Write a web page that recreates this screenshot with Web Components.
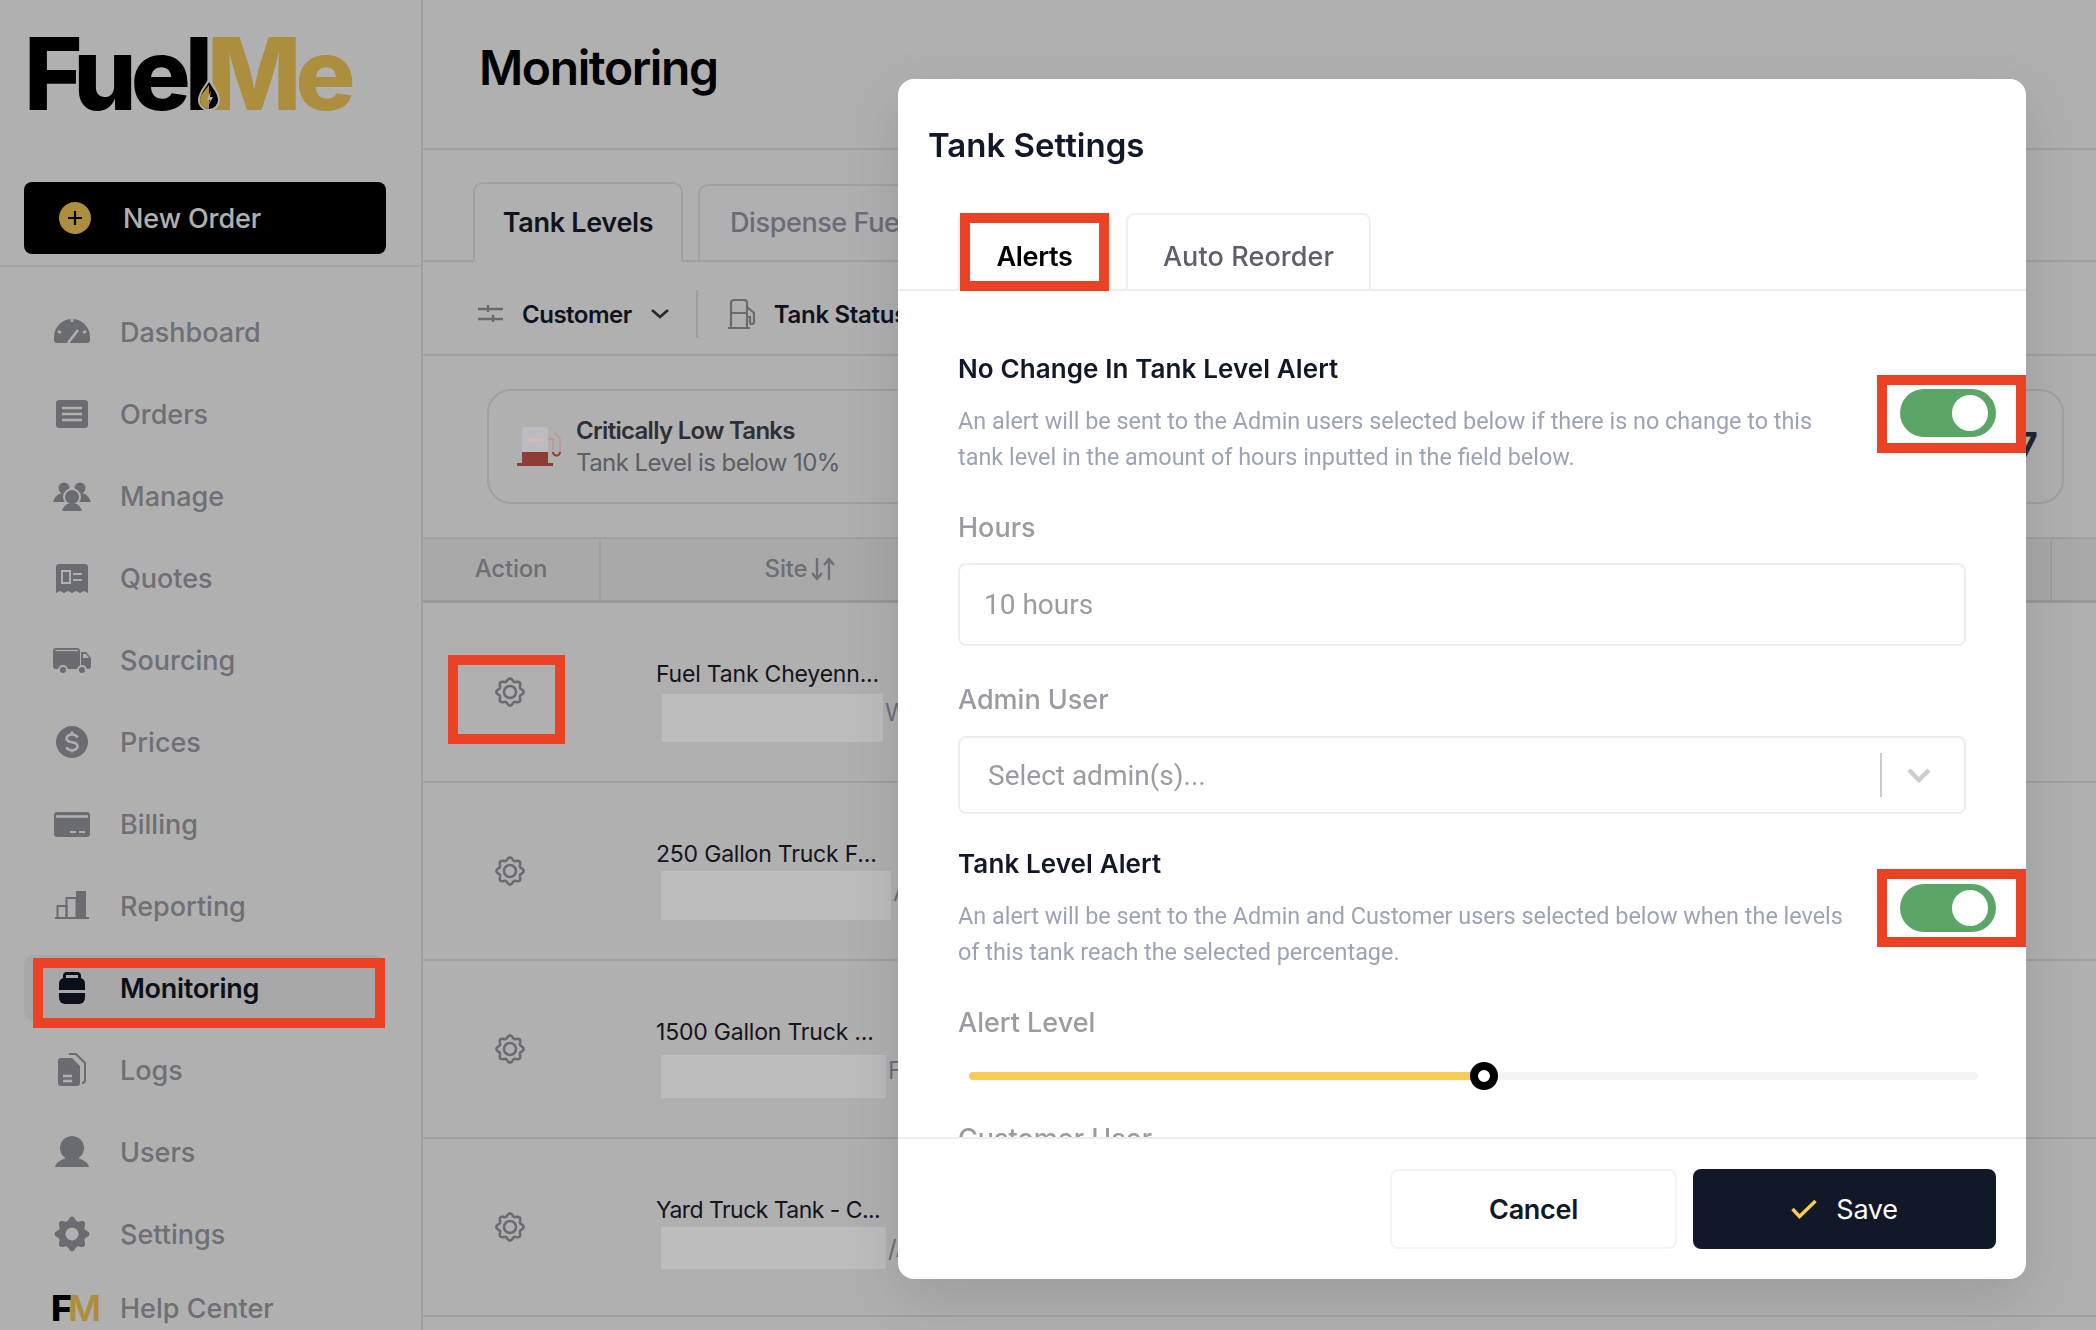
<!DOCTYPE html>
<html lang="en">
<head>
<meta charset="utf-8">
<title>FuelMe - Monitoring</title>
<style>
  html, body { margin: 0; height: 100%; }
  body { background: #fff; color: #111827; font-family: Inter, "Liberation Sans", sans-serif; overflow: hidden; }
</style>
</head>
<body>
<fm-app>
  <fm-sidebar slot="sidebar">
    <fm-nav-item label="Dashboard"><svg viewBox="0 0 36 36"><path d="M0 26v-3a18 18 0 0 1 36 0v3a3 3 0 0 1-3 3H3a3 3 0 0 1-3-3z"/><path d="M14 29l10-13M18 5v3M4 17l3 2M32 17l-3 2" stroke="#fff" stroke-width="2.6" fill="none"/></svg></fm-nav-item>
    <fm-nav-item label="Orders"><svg viewBox="0 0 36 36"><rect x="2" y="4" width="32" height="28" rx="3"/><path d="M8 12h20M8 18h20M8 24h20" stroke="#fff" stroke-width="2.6"/></svg></fm-nav-item>
    <fm-nav-item label="Manage"><svg viewBox="0 0 36 36"><circle cx="10" cy="10" r="5.5"/><circle cx="26" cy="10" r="5.5"/><path d="M-1 24c2-6 6-9 10-9s7 3 9 9zM18 24c2-6 5-9 9-9s8 3 10 9z"/><circle cx="18" cy="19" r="8" stroke="#fff" stroke-width="2"/><path d="M8 33c1.500-5 5-8 10-8s8.500 3 10 8z"/></svg></fm-nav-item>
    <fm-nav-item label="Quotes"><svg viewBox="0 0 36 36"><path d="M5 4h26a3 3 0 0 1 3 3v26l-4-2-4 2-4-2-4 2-4-2-4 2-4-2-4 2V7a3 3 0 0 1 3-3z"/><rect x="8" y="11" width="8" height="12" stroke="#fff" stroke-width="2" fill="none"/><path d="M19 14h9M19 20h9" stroke="#fff" stroke-width="2.200"/></svg></fm-nav-item>
    <fm-nav-item label="Sourcing"><svg viewBox="0 0 36 36"><rect x="-1" y="6" width="27" height="21" rx="3"/><path d="M27 10h5l5 6v9a3 3 0 0 1-3 2h-7z"/><path d="M1.500 8.500h22.500" fill="none" stroke="#fff" stroke-width="1.200"/><path d="M29 12h3l3 4h-6z" fill="#fff"/><circle cx="9" cy="28" r="4" stroke="#fff" stroke-width="2"/><circle cx="28" cy="28" r="4" stroke="#fff" stroke-width="2"/></svg></fm-nav-item>
    <fm-nav-item label="Prices"><svg viewBox="0 0 36 36"><circle cx="18" cy="18" r="16"/><path d="M23.500 13.500c-.8-2-3-3-5.500-3-3 0-5.500 1.500-5.500 4s2.500 3.200 5.500 3.700 5.500 1.500 5.500 4-2.500 4-5.500 4c-2.500 0-4.700-1-5.500-3M18 7.500v3M18 25.500v3" stroke="#fff" stroke-width="2.600" fill="none"/></svg></fm-nav-item>
    <fm-nav-item label="Billing"><svg viewBox="0 0 36 36"><rect y="6" width="36" height="25" rx="3"/><path d="M2 10.500h32" stroke="#fff" stroke-width="2.600"/><path d="M16 26h6M25 26h6" stroke="#fff" stroke-width="2.200"/></svg></fm-nav-item>
    <fm-nav-item label="Reporting"><svg viewBox="0 0 36 36"><path d="M1 30h34" stroke="currentColor" stroke-width="2"/><rect x="3.500" y="18" width="9" height="12" fill="none" stroke="currentColor" stroke-width="2"/><rect x="12.500" y="10" width="10" height="20" fill="none" stroke="currentColor" stroke-width="2"/><rect x="22" y="3" width="10" height="27"/></svg></fm-nav-item>
    <fm-nav-item label="Monitoring" active><svg viewBox="0 0 36 36"><path d="M13 2h10a4 4 0 0 1 4 4v2c3 1 4 3 4 6v6H5v-6c0-3 1-5 4-6V6a4 4 0 0 1 4-4z"/><rect x="12" y="5" width="12" height="3" fill="#f4f4f4"/><path d="M5 23h26v5a6 6 0 0 1-6 6H11a6 6 0 0 1-6-6z"/></svg></fm-nav-item>
    <fm-nav-item label="Logs"><svg viewBox="0 0 36 36"><path d="M15 2h7l9 9v17c0 2-1 3-3 3" fill="none" stroke="currentColor" stroke-width="2"/><path d="M7 6h11l8 8v17a3 3 0 0 1-3 3H7a3 3 0 0 1-3-3V9a3 3 0 0 1 3-3z"/><path d="M9 24h9M9 29h9" stroke="#fff" stroke-width="2.400"/></svg></fm-nav-item>
    <fm-nav-item label="Users"><svg viewBox="0 0 36 36"><circle cx="18" cy="14" r="12"/><path d="M1 33c1-5 6-7 11-9h12c5 2 10 4 11 9z"/></svg></fm-nav-item>
    <fm-nav-item label="Settings"><fm-gear filled></fm-gear></fm-nav-item>
    <fm-nav-item label="Help Center" tight><fm-mini-logo></fm-mini-logo></fm-nav-item>
  </fm-sidebar>

  <fm-monitoring slot="main">
    <fm-row name="Fuel Tank Cheyenn..." frag="W" box="221,48,91,6" first></fm-row>
    <fm-row name="250 Gallon Truck F..." frag="A" box="230,49,88,5"></fm-row>
    <fm-row name="1500 Gallon Truck ..." frag="F" box="225,43,94,5"></fm-row>
    <fm-row name="Yard Truck Tank - C..." frag="/A" box="225,42,88,5" style="--name-spacing:-0.55px"></fm-row>
  </fm-monitoring>
</fm-app>

<fm-overlay></fm-overlay>

<fm-modal heading="Tank Settings">
  <fm-alert-section heading="No Change In Tank Level Alert">An alert will be sent to the Admin users selected below if there is no change to this<br>tank level in the amount of hours inputted in the field below.</fm-alert-section>
  <fm-field label="Hours" gap="37" space="19"><fm-input value="10 hours"></fm-input></fm-field>
  <fm-field label="Admin User" gap="38" space="20"><fm-select placeholder="Select admin(s)..."></fm-select></fm-field>
  <fm-alert-section heading="Tank Level Alert" gap="32">An alert will be sent to the Admin and Customer users selected below when the levels<br>of this tank reach the selected percentage.</fm-alert-section>
  <fm-field label="Alert Level" gap="37" space="23" wide><fm-slider value="51"></fm-slider></fm-field>
  <fm-field label="Customer User" gap="33" space="20"><fm-select placeholder="Select customer(s)..."></fm-select></fm-field>
</fm-modal>

<fm-annotation x="33" y="958" w="352" h="70"></fm-annotation>
<fm-annotation x="448" y="655" w="117" h="89"></fm-annotation>
<fm-annotation x="960" y="213" w="149" h="78"></fm-annotation>
<fm-annotation x="1877" y="375" w="149" h="78"></fm-annotation>
<fm-annotation x="1877" y="869" w="149" h="78"></fm-annotation>

<script>
function gearPath(cx, cy, radius, bump, lobes) {
  const points = [];
  for (let i = 0; i < 96; i++) {
    const angle = (i / 96) * Math.PI * 2;
    const r = radius + bump * Math.cos(angle * lobes);
    points.push(`${(cx + r * Math.sin(angle)).toFixed(2)} ${(cy - r * Math.cos(angle)).toFixed(2)}`);
  }
  return `M${points.join('L')}Z`;
}

class FmApp extends HTMLElement {
  connectedCallback() {
    this.attachShadow({ mode: 'open' }).innerHTML = `
      <style>
        :host { display: flex; width: 100%; height: 1330px; overflow: hidden; }
        ::slotted([slot="main"]) { flex: 1; min-width: 0; }
      </style>
      <slot name="sidebar"></slot>
      <slot name="main"></slot>`;
  }
}

class FmSidebar extends HTMLElement {
  connectedCallback() {
    this.attachShadow({ mode: 'open' }).innerHTML = `
      <style>
        :host { display: block; flex: none; width: 423px; box-sizing: border-box; border-right: 2px solid #e8e8e8; }
        .head { height: 267px; box-sizing: border-box; border-bottom: 2px solid #efefef; padding: 38px 0 0 24px; }
        .new {
          display: flex; align-items: center; gap: 32px; width: 362px; height: 72px; margin-top: 72px;
          box-sizing: border-box; padding-left: 35px; background: #000; border-radius: 8px;
          color: #fff; font-size: 27px; font-weight: 500; letter-spacing: -0.1px;
        }
        .new svg { width: 32px; height: 32px; }
        nav { display: flex; flex-direction: column; gap: 16px; padding: 32px 36px 0 24px; }
      </style>
      <div class="head">
        <fm-logo></fm-logo>
        <div class="new">
          <svg viewBox="0 0 32 32"><circle cx="16" cy="16" r="16" fill="#faCE5A"/><path d="M16 9v14M9 16h14" stroke="#000" stroke-width="2.200"/></svg>
          <span>New Order</span>
        </div>
      </div>
      <nav><slot></slot></nav>`;
  }
}

class FmLogo extends HTMLElement {
  connectedCallback() {
    this.attachShadow({ mode: 'open' }).innerHTML = `
      <style>
        :host { display: block; position: relative; width: 330px; height: 72px; }
        .word { display: block; font-size: 100px; line-height: 72px; font-weight: 800; letter-spacing: -6px; color: #000; white-space: nowrap; }
        .me { color: #faCE5A; }
        svg { position: absolute; left: 174px; top: 41px; width: 22px; height: 32px; }
      </style>
      <span class="word">Fuel<span class="me">Me</span></span>
      <svg viewBox="0 0 22 32"><path d="M11 1c3 6 10 12 10 20a10 10 0 0 1-20 0C1 13 8 7 11 1z" fill="#000" stroke="#fff" stroke-width="2"/><path d="M2 21a9 9 0 0 0 9 9V6C8 11 2 15 2 21z" fill="#faCE5A"/><path d="M13 11l-4 10h3l-2 6 5-9h-3z" fill="#fff"/></svg>`;
  }
}

class FmMiniLogo extends HTMLElement {
  connectedCallback() {
    this.attachShadow({ mode: 'open' }).innerHTML = `
      <style>
        :host { display: block; width: 40px; margin-left: -3px; font-size: 36px; line-height: 36px; font-weight: 800; letter-spacing: -4px; color: #000; white-space: nowrap; }
        span { color: #faCE5A; font-weight: 600; }
      </style>
      F<span>M</span>`;
  }
}

class FmNavItem extends HTMLElement {
  connectedCallback() {
    const active = this.hasAttribute('active');
    if (this.hasAttribute('tight')) this.style.marginTop = '-8px';
    this.attachShadow({ mode: 'open' }).innerHTML = `
      <style>
        :host { display: flex; align-items: center; gap: 30px; height: 66px; padding-left: 30px; border-radius: 10px;
          font-size: 27px; font-weight: ${active ? 600 : 500}; letter-spacing: ${active ? -0.3 : 0}px;
          color: ${active ? '#111827' : '#a0a2ab'}; background: ${active ? '#f4f4f4' : 'transparent'}; }
        .icon { width: 36px; height: 36px; flex: none; color: ${active ? '#111827' : '#9c9da5'}; }
        ::slotted(svg) { width: 36px; height: 36px; display: block; fill: currentColor; overflow: visible; }
      </style>
      <div class="icon"><slot></slot></div>
      <span>${this.getAttribute('label')}</span>`;
  }
}

class FmGear extends HTMLElement {
  connectedCallback() {
    const filled = this.hasAttribute('filled');
    const body = filled
      ? `<path d="${gearPath(18, 18, 15.5, 2, 8)}" fill="currentColor"/><circle cx="18" cy="18" r="6.500" fill="#fff"/>`
      : `<path d="${gearPath(15, 15, 12.2, 1.4, 8)}" fill="none" stroke="currentColor" stroke-width="2.600"/><circle cx="15" cy="15" r="6" fill="none" stroke="currentColor" stroke-width="2.600"/>`;
    this.attachShadow({ mode: 'open' }).innerHTML = `
      <style>:host { display: block; width: ${filled ? 36 : 30}px; height: ${filled ? 36 : 30}px; } svg { display: block; width: 100%; height: 100%; }</style>
      <svg viewBox="0 0 ${filled ? '36 36' : '30 30'}">${body}</svg>`;
  }
}

class FmMonitoring extends HTMLElement {
  connectedCallback() {
    this.attachShadow({ mode: 'open' }).innerHTML = `
      <style>
        :host { display: block; }
        header { height: 150px; box-sizing: border-box; border-bottom: 2px solid #eaeaea; padding: 42px 0 0 56px; }
        h1 { margin: 0; font-size: 48px; line-height: 52px; font-weight: 600; letter-spacing: -1.400px; color: #000; }
        .tabs { display: flex; align-items: flex-end; gap: 15px; height: 112px; box-sizing: border-box; border-bottom: 2px solid #eaeaea; padding-left: 50px; }
        .tab { box-sizing: border-box; height: 76px; padding: 0 30px 2px; display: flex; align-items: center; border: 2px solid #eaeaea; border-bottom: 0; border-radius: 10px 10px 0 0; font-size: 27px; font-weight: 500; letter-spacing: -0.400px; color: #9b9dae; white-space: nowrap; }
        .tab.on { width: 210px; height: 80px; margin-bottom: -2px; padding: 0 0 1px; justify-content: center; background: #fff; color: #181c2d; font-weight: 600; letter-spacing: -0.300px; }
        .filters { display: flex; align-items: center; height: 94px; box-sizing: border-box; border-bottom: 2px solid #eaeaea; padding: 12px 0 0 55px; font-size: 24px; font-weight: 600; color: #181c2d; letter-spacing: -0.300px; white-space: nowrap; }
        .filters .sep { width: 2px; height: 48px; background: #e4e4e4; margin: 0 30px 0 27px; }
        .filters svg { flex: none; }
        .summary { height: 181px; box-sizing: border-box; padding: 33px 32px 0 64px; }
        .card { display: flex; align-items: center; height: 115px; box-sizing: border-box; border: 2px solid #e8e8e8; border-radius: 24px; padding: 0 24px 0 28px; }
        .card svg { position: relative; z-index: 20; flex: none; margin-right: 15px; }
        .card b { display: block; font-size: 24px; line-height: 32px; font-weight: 600; color: #444450; letter-spacing: -0.700px; }
        .card small { display: block; font-size: 24px; line-height: 32px; font-weight: 400; color: #858a94; letter-spacing: -0.550px; }
        .count { margin-left: auto; font-size: 40px; font-weight: 600; color: #333746; }
        .thead { display: flex; height: 66px; box-sizing: border-box; background: #f5f5f6; border-top: 2px solid #e6e6e6; border-bottom: 3px solid #dcdcdc; font-size: 24px; font-weight: 500; color: #9fa1aa; letter-spacing: -0.200px; }
        .thead div { display: flex; align-items: center; justify-content: center; gap: 4px; box-sizing: border-box; padding-bottom: 2px; }
        .thead .action { width: 178px; border-right: 2px solid #e6e6e6; }
        .thead .site { width: 398px; }
        .thead .rest { flex: 1; justify-content: flex-start; padding: 0 0 0 1051px; }
        .thead .rest i { display: block; width: 2px; height: 100%; background: #e6e6e6; }
      </style>
      <header><h1>Monitoring</h1></header>
      <div class="tabs">
        <div class="tab on">Tank Levels</div>
        <div class="tab">Dispense Fuel</div>
      </div>
      <div class="filters">
        <svg width="25" height="24" viewBox="0 0 25 24" fill="none" stroke="#9a9ba1" stroke-width="2.400"><path d="M0 7h25M0 17h25M10 3v7M15 13v7"/></svg>
        <span style="margin:0 19px;letter-spacing:-0.5px">Customer</span>
        <svg width="18" height="10" viewBox="0 0 18 10" fill="none" stroke="#3a3d4a" stroke-width="2.600"><path d="M1 1l8 7 8-7"/></svg>
        <div class="sep"></div>
        <svg width="29" height="30" viewBox="0 0 29 30" fill="none" stroke="#9a9ba1" stroke-width="2.200"><path d="M0 29h22M3 29V4a3 3 0 0 1 3-3h10a3 3 0 0 1 3 3v25M3 14h16M19 8l7 6v9a2 2 0 0 1-4 0v-5h-3"/></svg>
        <span style="margin-left:17px">Tank Status</span>
      </div>
      <div class="summary">
        <div class="card">
          <svg width="44" height="40" viewBox="0 0 44 40"><path d="M5 3a3 3 0 0 1 3-3h20a3 3 0 0 1 3 3v34H5z" fill="#bcbcc0"/><path d="M5 25h26v11H5z" fill="#8f3c34"/><path d="M0 36h36v3H0z" fill="#8f3c34"/><path d="M11 13h15" stroke="#dcb8b0" stroke-width="2.500"/><path d="M31 12h5v13a3 3 0 0 0 7 0V12l-5-6" fill="none" stroke="#c4958c" stroke-width="1.600"/><path d="M36 25a3 3 0 0 0 7 0" fill="none" stroke="#8f3c34" stroke-width="2"/></svg>
          <div><b>Critically Low Tanks</b><small>Tank Level is below 10%</small></div>
          <span class="count">7</span>
        </div>
      </div>
      <div class="thead">
        <div class="action">Action</div>
        <div class="site">Site
          <svg width="24" height="24" viewBox="0 0 24 24" fill="none" stroke="#9fa1aa" stroke-width="2.400"><path d="M6 1v21M1 16l5 6 5-6M18 23V2M13 8l5-6 5 6"/></svg>
        </div>
        <div class="rest"><i></i></div>
      </div>
      <slot></slot>`;
  }
}

class FmRow extends HTMLElement {
  connectedCallback() {
    const [boxW, boxH, boxTop, boxLeft] = this.getAttribute('box').split(',').map(Number);
    this.attachShadow({ mode: 'open' }).innerHTML = `
      <style>
        :host { display: flex; height: ${this.hasAttribute('first') ? 180 : 178}px; box-sizing: border-box; border-bottom: 2px solid #eaeaea; }
        .action { width: 174px; display: flex; align-items: center; justify-content: center; color: #9c9da6; flex: none; }
        .site { padding-left: 59px; font-size: 23px; letter-spacing: var(--name-spacing, -0.2px); color: #1f2029; white-space: nowrap; position: relative; flex: 1; }
        .name { position: absolute; top: 55px; line-height: 32px; }
        .mask { position: absolute; top: ${boxTop}px; left: ${boxLeft + 59}px; width: ${boxW}px; height: ${boxH}px; background: #bdbdbd; z-index: 20; }
        .frag { position: absolute; top: 90px; left: ${boxLeft + 59 + boxW + 2}px; font-size: 24px; line-height: 40px; color: #a0a2ab; }
      </style>
      <div class="action"><fm-gear></fm-gear></div>
      <div class="site">
        <span class="name">${this.getAttribute('name')}</span>
        <span class="mask"></span>
        <span class="frag">${this.getAttribute('frag')}</span>
      </div>`;
  }
}

class FmOverlay extends HTMLElement {
  connectedCallback() {
    this.attachShadow({ mode: 'open' }).innerHTML = `
      <style>:host { display: block; position: fixed; inset: 0; background: rgba(0,0,0,0.31); z-index: 10; }</style>`;
  }
}

class FmModal extends HTMLElement {
  connectedCallback() {
    this.attachShadow({ mode: 'open' }).innerHTML = `
      <style>
        :host {
          position: fixed; left: 898px; top: 79px; width: 1128px; height: 1200px; z-index: 30;
          display: flex; flex-direction: column; background: #fff; border-radius: 16px;
          box-shadow: 0 20px 60px rgba(0,0,0,0.12);
          font-family: Inter, "Liberation Sans", sans-serif;
        }
        h2 { margin: 0; padding: 46px 0 48px 30px; font-size: 33px; line-height: 40px; font-weight: 600; color: #111827; }
        .tabs { display: flex; gap: 15px; height: 78px; box-sizing: border-box; padding-left: 60px; border-bottom: 2px solid #ecedf2; flex: none; }
        .tab { box-sizing: border-box; height: 78px; padding-top: 6px; display: flex; align-items: center; justify-content: center; border: 2px solid #f0f0f3; border-bottom: 0; border-radius: 8px 8px 0 0; font-size: 27px; font-weight: 500; letter-spacing: 0.100px; color: #5b5f6e; }
        .tab.on { width: 153px; color: #000; font-weight: 600; letter-spacing: -0.300px; }
        .tab.off { width: 245px; }
        .body { flex: 1; min-height: 0; overflow: hidden; padding: 60px 30px 0 60px; }
        footer { flex: none; height: 142px; box-sizing: border-box; border-top: 2px solid #ecedf2; padding: 30px 30px 0 0; display: flex; justify-content: flex-end; gap: 16px; }
        button { height: 80px; border-radius: 8px; font: inherit; font-size: 27px; letter-spacing: -0.300px; display: flex; align-items: center; justify-content: center; }
        .cancel { width: 287px; background: #fff; border: 2px solid #f3f4f6; color: #111827; font-weight: 600; }
        .save { width: 303px; background: #111827; border: 0; color: #fff; gap: 19px; }
      </style>
      <h2>${this.getAttribute('heading')}</h2>
      <div class="tabs"><div class="tab on">Alerts</div><div class="tab off">Auto Reorder</div></div>
      <div class="body"><slot></slot></div>
      <footer>
        <button class="cancel">Cancel</button>
        <button class="save"><svg width="26" height="20" viewBox="0 0 26 20" fill="none" stroke="#f6cb58" stroke-width="3.400"><path d="M1.500 10l7 7.500L24.500 2"/></svg>Save</button>
      </footer>`;
  }
}

class FmAlertSection extends HTMLElement {
  connectedCallback() {
    this.style.marginTop = `${this.getAttribute('gap') || 0}px`;
    this.attachShadow({ mode: 'open' }).innerHTML = `
      <style>
        :host { display: flex; justify-content: space-between; align-items: flex-start; }
        h3 { margin: 0 0 16px; font-size: 26px; line-height: 36px; font-weight: 600; letter-spacing: 0.100px; color: #111827; }
        p { margin: 0; font-family: Roboto, "Liberation Sans", sans-serif; font-size: 23.400px; line-height: 36px; color: #9ca3b5; white-space: nowrap; }
        fm-toggle { margin-top: 38px; }
      </style>
      <div><h3>${this.getAttribute('heading')}</h3><p><slot></slot></p></div>
      <fm-toggle></fm-toggle>`;
  }
}

class FmToggle extends HTMLElement {
  connectedCallback() {
    this.attachShadow({ mode: 'open' }).innerHTML = `
      <style>
        :host { display: flex; align-items: center; justify-content: flex-end; width: 96px; height: 48px; flex: none; box-sizing: border-box; padding-right: 8px; background: #5ba567; border-radius: 24px; }
        i { display: block; width: 36px; height: 36px; border-radius: 50%; background: #fff; }
      </style>
      <i></i>`;
  }
}

class FmField extends HTMLElement {
  connectedCallback() {
    this.style.marginTop = `${this.getAttribute('gap')}px`;
    this.attachShadow({ mode: 'open' }).innerHTML = `
      <style>
        :host { display: block; margin-right: ${this.hasAttribute('wide') ? 0 : 30}px; }
        label { display: block; font-size: 27px; line-height: 32px; font-weight: 500; color: #9a9ba3; margin-bottom: ${this.getAttribute('space')}px; }
      </style>
      <label>${this.getAttribute('label')}</label>
      <slot></slot>`;
  }
}

class FmInput extends HTMLElement {
  connectedCallback() {
    this.attachShadow({ mode: 'open' }).innerHTML = `
      <style>
        :host { display: flex; align-items: center; height: 83px; box-sizing: border-box; padding-left: 24px; border: 2px solid #ecedf2; border-radius: 8px; font-family: Roboto, "Liberation Sans", sans-serif; font-size: 28px; color: #9a9ba3; }
      </style>
      <span>${this.getAttribute('value')}</span>`;
  }
}

class FmSelect extends HTMLElement {
  connectedCallback() {
    this.attachShadow({ mode: 'open' }).innerHTML = `
      <style>
        :host { display: flex; align-items: center; height: 78px; box-sizing: border-box; padding: 0 33px 0 28px; border: 2px solid #ecedf2; border-radius: 8px; font-family: Roboto, "Liberation Sans", sans-serif; font-size: 28px; color: #9a9ba3; }
        span { flex: 1; }
        i { display: block; width: 2px; height: 44px; background: #ccc; margin-right: 25px; }
      </style>
      <span>${this.getAttribute('placeholder')}</span>
      <i></i>
      <svg width="24" height="15" viewBox="0 0 24 15" fill="none" stroke="#ccc" stroke-width="4.400"><path d="M2 2l10 10L22 2"/></svg>`;
  }
}

class FmSlider extends HTMLElement {
  connectedCallback() {
    const value = Number(this.getAttribute('value'));
    this.attachShadow({ mode: 'open' }).innerHTML = `
      <style>
        :host { display: block; position: relative; height: 28px; margin: 0 18px 0 11px; }
        .track { position: absolute; left: 0; right: 0; top: 10px; height: 8px; border-radius: 4px; background: #f4f4f4; }
        .fill { position: absolute; left: 0; top: 10px; height: 8px; width: ${value}%; border-radius: 4px; background: #f6cb58; }
        .thumb { position: absolute; left: ${value}%; top: 0; width: 28px; height: 28px; margin-left: -14px; box-sizing: border-box; border: 8px solid #000; border-radius: 50%; background: #fff; }
      </style>
      <div class="track"></div><div class="fill"></div><div class="thumb"></div>`;
  }
}

class FmAnnotation extends HTMLElement {
  connectedCallback() {
    const attr = (name) => this.getAttribute(name);
    this.attachShadow({ mode: 'open' }).innerHTML = `
      <style>
        :host { position: fixed; left: ${attr('x')}px; top: ${attr('y')}px; width: ${attr('w')}px; height: ${attr('h')}px; box-sizing: border-box; border: 10px solid #eb4125; z-index: 40; pointer-events: none; }
      </style>`;
  }
}

customElements.define('fm-app', FmApp);
customElements.define('fm-sidebar', FmSidebar);
customElements.define('fm-logo', FmLogo);
customElements.define('fm-mini-logo', FmMiniLogo);
customElements.define('fm-nav-item', FmNavItem);
customElements.define('fm-gear', FmGear);
customElements.define('fm-monitoring', FmMonitoring);
customElements.define('fm-row', FmRow);
customElements.define('fm-overlay', FmOverlay);
customElements.define('fm-modal', FmModal);
customElements.define('fm-alert-section', FmAlertSection);
customElements.define('fm-toggle', FmToggle);
customElements.define('fm-field', FmField);
customElements.define('fm-input', FmInput);
customElements.define('fm-select', FmSelect);
customElements.define('fm-slider', FmSlider);
customElements.define('fm-annotation', FmAnnotation);
</script>
</body>
</html>
